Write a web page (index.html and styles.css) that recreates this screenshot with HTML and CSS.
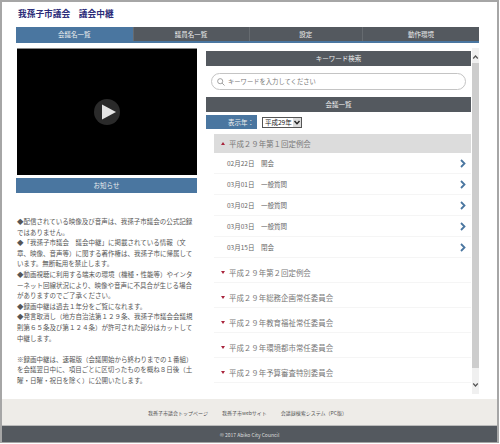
FILE: index.html
```html
<!DOCTYPE html>
<html lang="ja">
<head>
<meta charset="utf-8">
<title>我孫子市議会 議会中継</title>
<link rel="stylesheet" href="styles.css">
</head>
<body>
<div class="window">
  <header class="site-head"><h1>我孫子市議会　議会中継</h1></header>
  <nav class="tabs">
    <a class="tab active">会議名一覧</a>
    <a class="tab">議員名一覧</a>
    <a class="tab">設定</a>
    <a class="tab">動作環境</a>
  </nav>
  <main class="content">
    <section class="left">
      <div class="video">
        <div class="play"><svg width="26" height="26" viewBox="0 0 26 26"><circle cx="13" cy="13" r="13" fill="#2a2a2a"/><path d="M8 5.5 L22 13 L8 20.5 Z" fill="#e4e4e4"/></svg></div>
      </div>
      <div class="bar blue notice-bar">お知らせ</div>
      <div class="notice">
        <p>◆配信されている映像及び音声は、我孫子市議会の公式記録ではありません。</p>
        <p>◆「我孫子市議会　議会中継」に掲載されている情報（文章、映像、音声等）に関する著作権は、我孫子市に帰属しています。無断転用を禁止します。</p>
        <p>◆動画視聴に利用する端末の環境（機種・性能等）やインターネット回線状況により、映像や音声に不具合が生じる場合がありますのでご了承ください。</p>
        <p>◆録画中継は過去１年分をご覧になれます。</p>
        <p>◆発言取消し（地方自治法第１２９条、我孫子市議会会議規則第６５条及び第１２４条）が許可された部分はカットして中継します。</p>
        <p class="gap">※録画中継は、速報版（会議開始から終わりまでの１番組）を会議翌日中に、項目ごとに区切ったものを概ね８日後（土曜・日曜・祝日を除く）に公開いたします。</p>
      </div>
    </section>
    <section class="right">
      <div class="bar dark">キーワード検索</div>
      <div class="search">
        <svg width="8" height="8" viewBox="0 0 10 10"><circle cx="4" cy="4" r="3.2" fill="none" stroke="#8a8a8a"/><path d="M6.4 6.4 L9.4 9.4" stroke="#8a8a8a"/></svg>
        <span>キーワードを入力してください</span>
      </div>
      <div class="bar dark">会議一覧</div>
      <div class="year-row">
        <div class="year-label">表示年：</div>
        <div class="year"><span>平成29年</span><svg class="year-arrow" width="8" height="9" viewBox="0 0 8 9"><rect width="8" height="9" fill="#dcdcdc"/><path d="M1.5 3 L4 5.8 L6.5 3" fill="none" stroke="#222" stroke-width="1.4"/></svg></div>
      </div>
      <div class="group open"><i class="tri up"></i>平成２９年第１回定例会</div>
      <a class="day"><span>02月22日</span><span>開会</span><svg class="chev" width="6" height="9" viewBox="0 0 6 9"><path d="M1 1 L4.5 4.5 L1 8" fill="none" stroke="#4a76a0" stroke-width="1.8"/></svg></a>
      <a class="day"><span>03月01日</span><span>一般質問</span><svg class="chev" width="6" height="9" viewBox="0 0 6 9"><path d="M1 1 L4.5 4.5 L1 8" fill="none" stroke="#4a76a0" stroke-width="1.8"/></svg></a>
      <a class="day"><span>03月02日</span><span>一般質問</span><svg class="chev" width="6" height="9" viewBox="0 0 6 9"><path d="M1 1 L4.5 4.5 L1 8" fill="none" stroke="#4a76a0" stroke-width="1.8"/></svg></a>
      <a class="day"><span>03月03日</span><span>一般質問</span><svg class="chev" width="6" height="9" viewBox="0 0 6 9"><path d="M1 1 L4.5 4.5 L1 8" fill="none" stroke="#4a76a0" stroke-width="1.8"/></svg></a>
      <a class="day"><span>03月15日</span><span>閉会</span><svg class="chev" width="6" height="9" viewBox="0 0 6 9"><path d="M1 1 L4.5 4.5 L1 8" fill="none" stroke="#4a76a0" stroke-width="1.8"/></svg></a>
      <div class="group"><i class="tri"></i>平成２９年第２回定例会</div>
      <div class="group"><i class="tri"></i>平成２９年総務企画常任委員会</div>
      <div class="group"><i class="tri"></i>平成２９年教育福祉常任委員会</div>
      <div class="group"><i class="tri"></i>平成２９年環境都市常任委員会</div>
      <div class="group"><i class="tri"></i>平成２９年予算審査特別委員会</div>
    </section>
    <div class="scrollbar">
      <svg width="7" height="15" viewBox="0 0 7 15"><path d="M1.2 10.5 L3.5 8 L5.8 10.5" fill="none" stroke="#555" stroke-width="1.2"/></svg>
      <div class="thumb"></div>
      <svg width="7" height="14" viewBox="0 0 7 14"><path d="M1.2 3.5 L3.5 6 L5.8 3.5" fill="none" stroke="#555" stroke-width="1.2"/></svg>
    </div>
  </main>
  <footer>
    <div class="foot-links"><a>我孫子市議会トップページ</a><a>我孫子市webサイト</a><a>会議録検索システム（PC版）</a></div>
    <div class="copy">© 2017 Abiko City Council</div>
  </footer>
</div>
</body>
</html>
```
FILE: styles.css
```css
* { box-sizing: border-box; }
html, body { margin: 0; padding: 0; background: #fff; }
body { width: 500px; height: 444px; overflow: hidden; font-family: "Noto Sans CJK JP", "Noto Sans", sans-serif; color: #666; }
.window { width: 499px; height: 443px; border: 2px solid #a6a6a6; border-bottom-width: 1px; display: flex; flex-direction: column; background: #fff; }
.site-head { height: 25px; padding: 4px 0 0 16px; }
h1 { margin: 0; font-size: 8.7px; line-height: 15px; font-weight: 700; color: #2b2b78; }
.tabs { display: grid; grid-template-columns: 116.5px 116px 113.5px 117px; margin-left: 14px; width: 463px; height: 16px; border-bottom: 2px solid #4a76a0; }
.tab { background: #54595f; color: #eee; font-size: 6.5px; line-height: 14px; text-align: center; border-left: 1px solid #666b70; }
.tab.active { background: #4a76a0; border-left: 0; }
.content { display: flex; height: 356px; padding: 5px 0 0 14px; }
.left { width: 181px; flex: none; }
.video { height: 127px; margin-left: 1px; background: #000; border-top: 1px solid #888; display: flex; align-items: center; justify-content: center; }
.play { height: 26px; }
.play svg { display: block; }
.bar { height: 15px; line-height: 15px; font-size: 6.5px; color: #eee; text-align: center; }
.blue { background: #4a76a0; }
.dark { background: #54595f; }
.notice-bar { margin-top: 3px; }
.notice { margin-top: 23px; padding-left: 1px; font-size: 6.5px; line-height: 10.6px; color: #555; }
.notice p { margin: 0; }
.notice p.gap { margin-top: 10.6px; }
.right { width: 265px; flex: none; margin: 3px 0 0 9px; overflow: hidden; }
.search { height: 17px; margin: 7px 5px; border: 1px solid #c4c4c4; border-radius: 9px; display: flex; align-items: center; gap: 3px; padding-left: 5px; font-size: 6.3px; color: #777; }
.search svg { flex: none; }
.year-row { display: flex; align-items: center; gap: 5px; height: 14px; margin: 3px 0 5px; }
.year-label { width: 51px; height: 14px; padding-right: 3px; background: #4a76a0; color: #eee; font-size: 6.5px; line-height: 14px; text-align: right; }
.year { display: flex; align-items: center; justify-content: space-between; width: 40px; height: 11px; padding: 0 0 0 2px; font-size: 6.5px; line-height: 9px; color: #222; background: #fff; border: 1px solid #555; }
.year-arrow { flex: none; }
.group { display: flex; align-items: center; height: 25px; margin-left: 8px; padding: 5px 0 0 7px; font-size: 7.45px; color: #777; border-bottom: 1px solid #f5f5f5; }
.group.open { height: 19px; padding-top: 0; background: #dcdcdc; border: 0; }
.tri { width: 0; height: 0; margin-right: 4px; border: 2px solid transparent; border-top: 3px solid #a8243c; border-bottom: 0; }
.tri.up { border-top: 0; border-bottom: 3px solid #a8243c; }
.day { display: flex; align-items: center; height: 21px; margin-left: 8px; padding: 0 5px 0 13px; font-size: 6.5px; color: #666; border-bottom: 1px solid #f5f5f5; }
.day span:first-child { width: 34px; }
.chev { margin-left: auto; }
.scrollbar { width: 7px; margin-left: 1px; flex: none; height: 346px; background: #f0f0f0; display: flex; flex-direction: column; align-items: center; justify-content: space-between; }
.scrollbar svg { flex: none; }
.thumb { flex: 1; width: 7px; margin-bottom: 12px; background: #cdcdcd; }
footer { flex: none; }
.foot-links { height: 27px; background: #eeece8; border-bottom: 1px solid #bbb; display: flex; justify-content: center; align-items: center; gap: 14px; font-size: 5px; color: #555; padding-right: 4px; }
.copy { height: 16px; background: #54595f; color: #ddd; font-size: 5px; line-height: 17px; text-align: center; }
```
